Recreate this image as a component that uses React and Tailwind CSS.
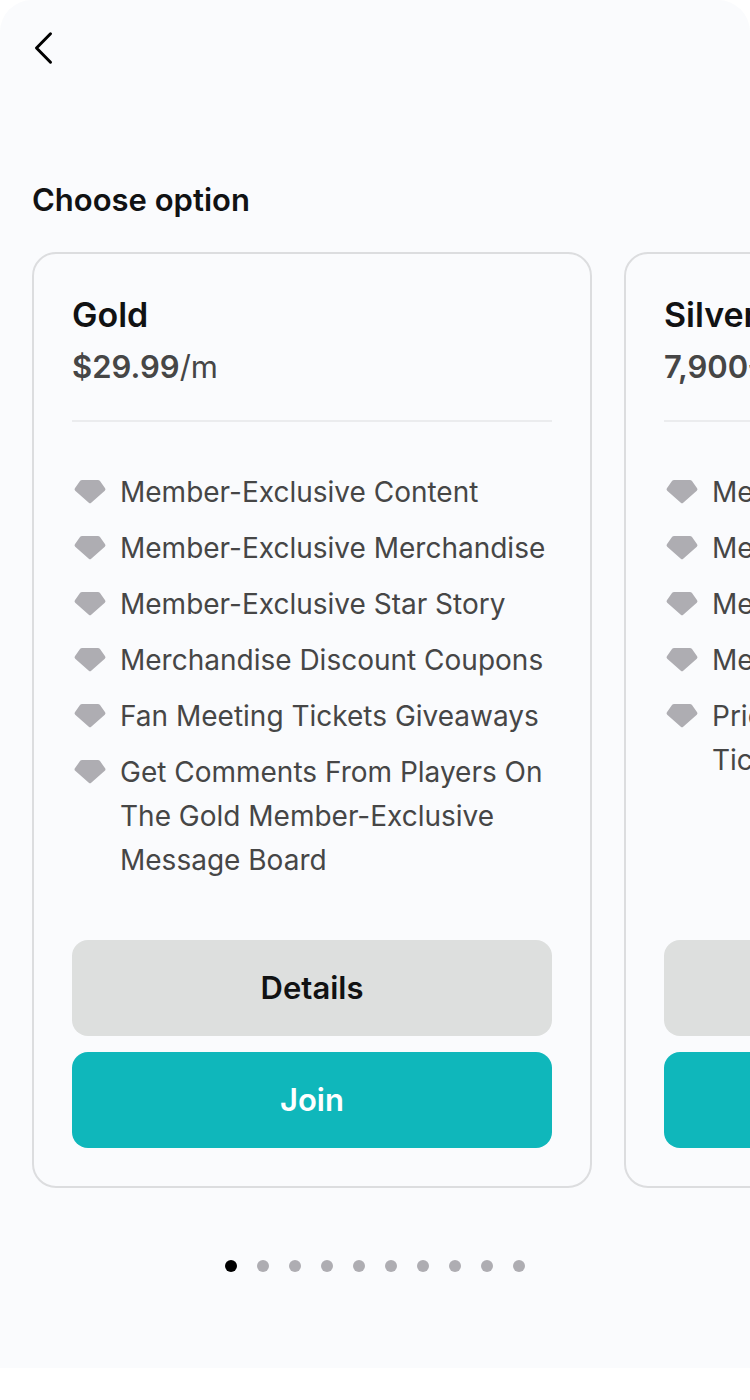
import { useState } from "react";

const plans = [
  {
    name: "Gold",
    price: "$29.99",
    period: "/m",
    benefits: [
      "Member-Exclusive Content",
      "Member-Exclusive Merchandise",
      "Member-Exclusive Star Story",
      "Merchandise Discount Coupons",
      "Fan Meeting Tickets Giveaways",
      "Get Comments From Players On The Gold Member-Exclusive Message Board",
    ],
  },
  {
    name: "Silver",
    price: "7,900원",
    period: "/m",
    benefits: [
      "Member-Exclusive Content",
      "Member-Exclusive Merchandise",
      "Member-Exclusive Star Story",
      "Merchandise Discount Coupons",
      "Priority For Fan Meeting Event Tickets",
    ],
  },
];

const TOTAL_PAGES = 10;

function GemIcon() {
  return (
    <svg
      viewBox="0 0 36 44"
      className="h-11 w-9 shrink-0"
      fill="#aeadb2"
      aria-hidden="true"
    >
      <path d="M10.2 10h15.6q1.4 0 2.2 1.1l5.1 7.2q.9 1.4-.3 2.5L19.2 32.7q-1.2 1.1-2.4 0L3.2 20.8q-1.2-1.1-.3-2.5L8 11.1Q8.8 10 10.2 10z" />
    </svg>
  );
}

function PlanCard({ plan }) {
  return (
    <article className="flex w-[560px] shrink-0 flex-col rounded-3xl border-2 border-[#dcdddf] p-[38px]">
      <h2 className="text-[34px]/[46px] font-semibold text-[#111213]">
        {plan.name}
      </h2>
      <p className="mt-1 text-[31px]/[50px] text-[#464646]">
        <span className="font-semibold">{plan.price}</span>
        {plan.period}
      </p>
      <hr className="mt-7 border-t-2 border-[#ebecee]" />

      <ul className="mt-12 mb-[58px] flex flex-col gap-3">
        {plan.benefits.map((benefit) => (
          <li key={benefit} className="flex gap-3">
            <GemIcon />
            <span className="text-[28px]/11 text-[#464646]">{benefit}</span>
          </li>
        ))}
      </ul>

      <div className="mt-auto flex flex-col gap-4 text-[31px]/10 font-semibold">
        <button
          type="button"
          className="h-24 cursor-pointer rounded-2xl bg-[#dddfde] text-[#111213]"
        >
          Details
        </button>
        <button
          type="button"
          className="h-24 cursor-pointer rounded-2xl bg-[#0fb7bb] text-white"
        >
          Join
        </button>
      </div>
    </article>
  );
}

function App() {
  const [page, setPage] = useState(0);

  return (
    <main className="rounded-t-[32px] bg-[#fafbfd] pb-24 font-['Inter','Noto_Sans_CJK_KR',sans-serif]">
      <header className="flex h-24 items-center px-6">
        <button type="button" aria-label="Back" className="cursor-pointer">
          <svg
            viewBox="0 0 40 40"
            className="size-10"
            fill="none"
            stroke="#000"
            strokeWidth="3"
            strokeLinecap="round"
            strokeLinejoin="round"
          >
            <path d="M26.5 5.8 12.5 20l14 14.2" />
          </svg>
        </button>
      </header>

      <h1 className="mt-20 px-8 text-[31px]/12 font-semibold text-[#111213]">
        Choose option
      </h1>

      <section
        aria-label="Membership options"
        className="mt-7 flex gap-8 overflow-x-auto px-8 [scrollbar-width:none]"
      >
        {plans.map((plan) => (
          <PlanCard key={plan.name} plan={plan} />
        ))}
      </section>

      {/* Pagination */}
      <nav aria-label="Pages" className="mt-18 flex justify-center gap-5">
        {Array.from({ length: TOTAL_PAGES }, (_, index) => (
          <button
            key={index}
            type="button"
            aria-label={`Page ${index + 1}`}
            onClick={() => setPage(index)}
            className={
              index === page
                ? "size-3 cursor-pointer rounded-full bg-black"
                : "size-3 cursor-pointer rounded-full bg-[#aeadb2]"
            }
          />
        ))}
      </nav>
    </main>
  );
}

export default App;
